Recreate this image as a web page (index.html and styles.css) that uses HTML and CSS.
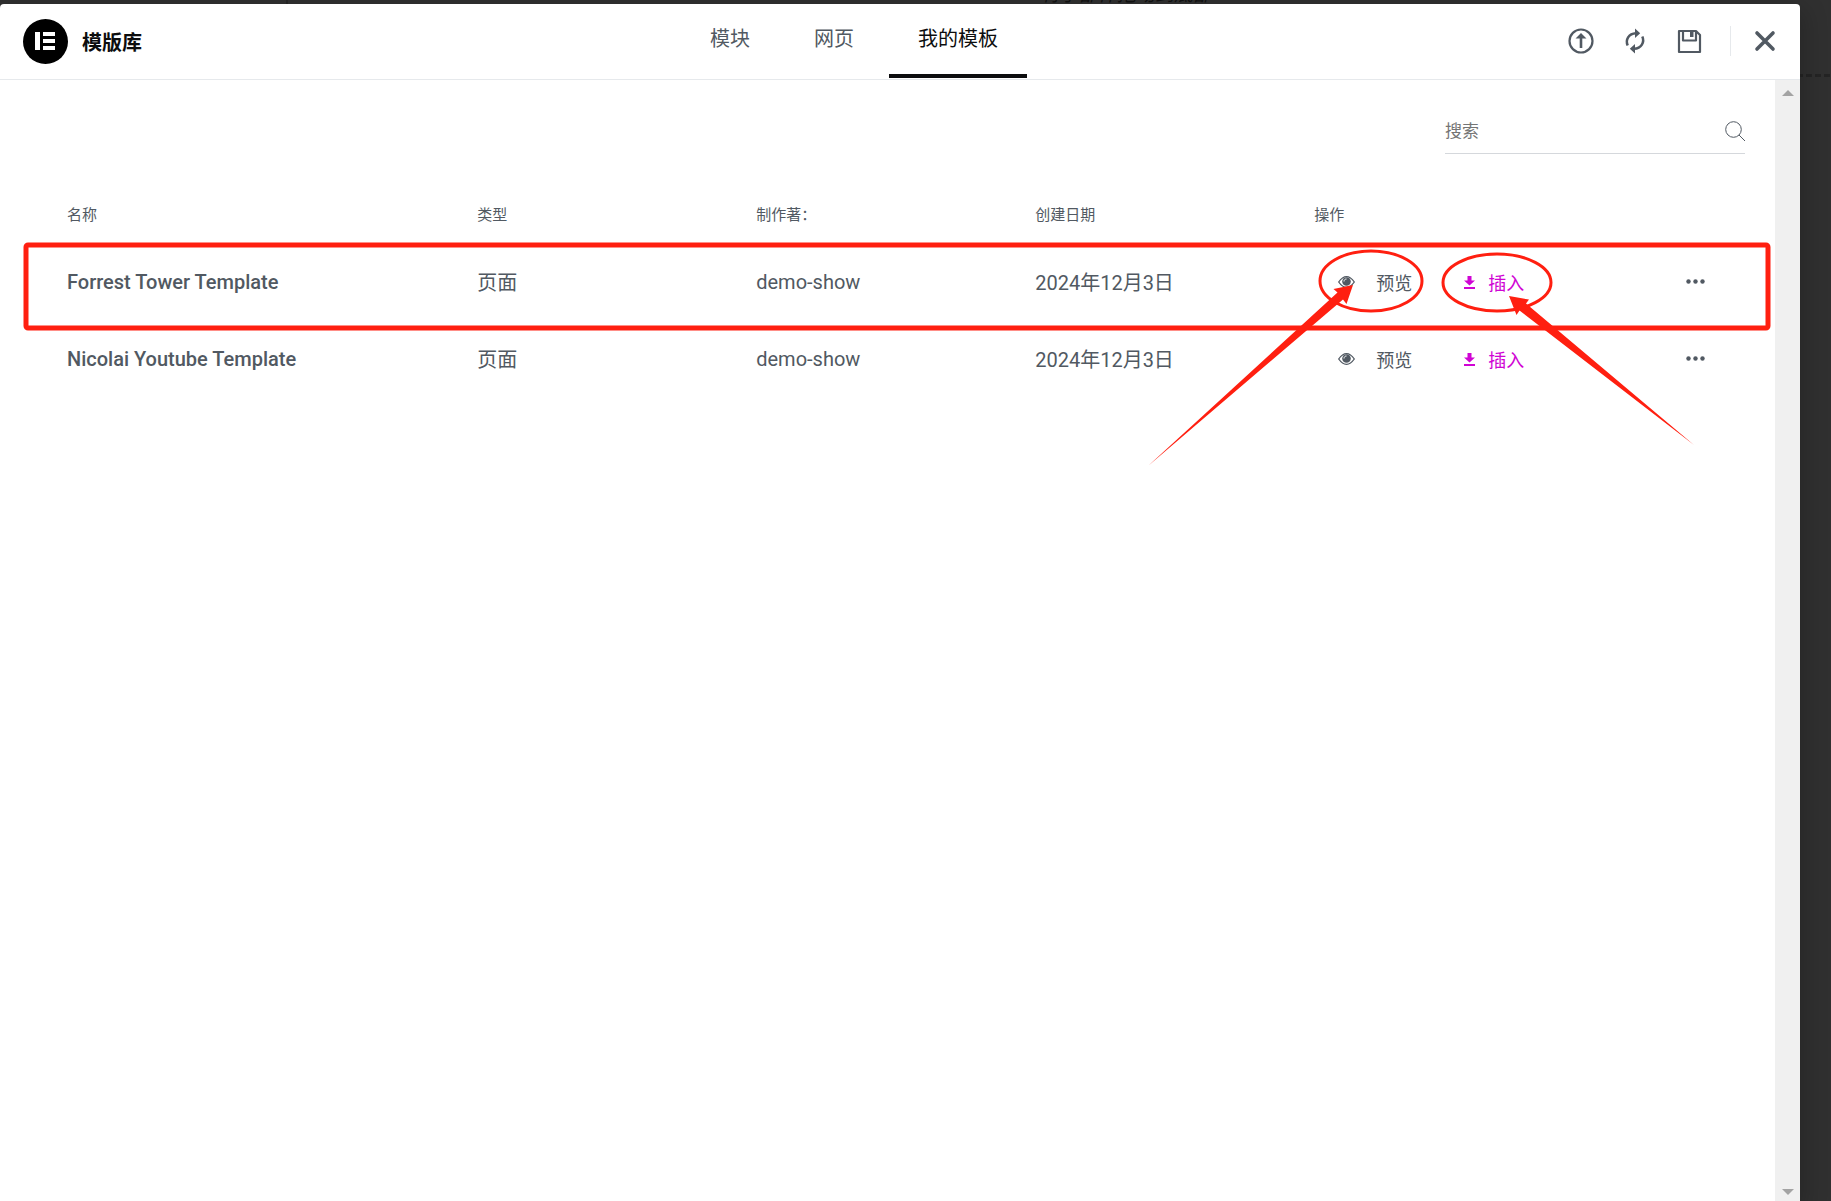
FILE: index.html
```html
<!DOCTYPE html>
<html lang="zh-CN">
<head>
<meta charset="utf-8">
<title>模版库</title>
<link rel="stylesheet" href="styles.css">
</head>
<body>
<div class="backdrop" aria-hidden="true">
  <p class="drop-hint">将小部件拖动到底部</p>
  <div class="drop-line"></div>
  <div class="panel-edge"></div>
</div>
<main class="modal">
  <header class="header">
    <div class="brand">
      <svg class="brand-logo" viewBox="0 0 45 45"><circle cx="22.500" cy="22.500" r="22.500"/><path fill="#fff" d="M12 13h5v18h-5zM20 13h12v4H20zM20 20h12v4H20zM20 27h12v4H20z"/></svg>
      <h1 class="brand-title">模版库</h1>
    </div>
    <nav class="tabs">
      <button class="tab" type="button">模块</button>
      <button class="tab" type="button">网页</button>
      <button class="tab tab-active" type="button">我的模板</button>
    </nav>
    <div class="tools">
      <button class="tool" type="button" aria-label="导入模板"><svg viewBox="0 0 26 26"><circle cx="13" cy="13" r="11.500" fill="none" stroke="currentColor" stroke-width="2.200"/><path fill="currentColor" d="M13 5l5.500 5.500h-4.200V20h-2.600v-9.500H7.500z"/></svg></button>
      <button class="tool" type="button" aria-label="同步"><svg viewBox="0 0 26 26"><g fill="none" stroke="currentColor" stroke-width="2.500"><path d="M5.700 17.500C3.200 12 6.500 5.500 14 5.200"/><path d="M20.300 8.500C22.800 14 19.500 20.500 12 20.800"/></g><path fill="currentColor" d="M13 .5l5.200 4.700L13 10zM13 16l-5.200 4.800L13 25.500z"/></svg></button>
      <button class="tool" type="button" aria-label="保存"><svg viewBox="0 0 26 26"><path fill="none" stroke="currentColor" stroke-width="2.200" stroke-linejoin="round" d="M3 3h17l4 4v17H3z M7 3v9.500h13V3"/><path fill="currentColor" d="M14 3h3.500v6H14z"/></svg></button>
      <button class="tool tool-close" type="button" aria-label="关闭"><svg viewBox="0 0 26 26"><path fill="none" stroke="currentColor" stroke-width="3.600" stroke-linecap="round" d="M5 5l16 16M21 5L5 21"/></svg></button>
    </div>
  </header>
  <div class="body">
    <section class="content">
      <form class="search">
        <input class="search-input" type="search" placeholder="搜索" aria-label="搜索">
        <svg class="search-icon" viewBox="0 0 20 20"><circle cx="8.500" cy="8.500" r="7.800"/><path d="M14 14l6 6"/></svg>
      </form>
      <table class="templates">
        <colgroup><col class="col-name"><col class="col-meta"><col class="col-meta"><col class="col-meta"><col class="col-actions"></colgroup>
        <thead>
          <tr><th>名称</th><th>类型</th><th>制作著：</th><th>创建日期</th><th>操作</th></tr>
        </thead>
        <tbody>
          <tr>
            <td class="name">Forrest Tower Template</td><td>页面</td><td>demo-show</td><td>2024年12月3日</td>
            <td><div class="actions">
              <button class="preview" type="button"><svg class="eye" viewBox="0 0 17 12"><path fill="none" stroke="currentColor" stroke-width="1.300" d="M.7 6C3.500 2 6 .7 8.500 .7S13.500 2 16.300 6C13.500 10 11 11.300 8.500 11.300S3.500 10 .7 6z"/><circle cx="8.500" cy="5.500" r="4.300" fill="currentColor"/><path fill="none" stroke="#fff" d="M6 5.500C6 4 7 3 8.500 3"/></svg>预览</button>
              <button class="insert" type="button"><svg class="download" viewBox="0 0 11 14"><path fill="currentColor" d="M3.500 1h4v4.500H11L5.500 10.500 0 5.500h3.500zM0 12h11v2H0z"/></svg>插入</button>
              <button class="more" type="button" aria-label="更多"><svg viewBox="0 0 19 5"><circle cx="2.500" cy="2.500" r="2.200"/><circle cx="9.500" cy="2.500" r="2.200"/><circle cx="16.500" cy="2.500" r="2.200"/></svg></button>
            </div></td>
          </tr>
          <tr>
            <td class="name">Nicolai Youtube Template</td><td>页面</td><td>demo-show</td><td>2024年12月3日</td>
            <td><div class="actions">
              <button class="preview" type="button"><svg class="eye" viewBox="0 0 17 12"><path fill="none" stroke="currentColor" stroke-width="1.300" d="M.7 6C3.500 2 6 .7 8.500 .7S13.500 2 16.300 6C13.500 10 11 11.300 8.500 11.300S3.500 10 .7 6z"/><circle cx="8.500" cy="5.500" r="4.300" fill="currentColor"/><path fill="none" stroke="#fff" d="M6 5.500C6 4 7 3 8.500 3"/></svg>预览</button>
              <button class="insert" type="button"><svg class="download" viewBox="0 0 11 14"><path fill="currentColor" d="M3.500 1h4v4.500H11L5.500 10.500 0 5.500h3.500zM0 12h11v2H0z"/></svg>插入</button>
              <button class="more" type="button" aria-label="更多"><svg viewBox="0 0 19 5"><circle cx="2.500" cy="2.500" r="2.200"/><circle cx="9.500" cy="2.500" r="2.200"/><circle cx="16.500" cy="2.500" r="2.200"/></svg></button>
            </div></td>
          </tr>
        </tbody>
      </table>
    </section>
    <div class="scrollbar" aria-hidden="true">
      <svg viewBox="0 0 12 6"><path d="M6 0l6 6H0z"/></svg>
      <svg viewBox="0 0 12 6"><path d="M0 0h12L6 6z"/></svg>
    </div>
  </div>
</main>
<svg class="markup" viewBox="0 0 1831 1201" aria-hidden="true">
  <g fill="none" stroke="#ff1f10">
    <rect x="26" y="245" width="1742" height="83" rx="2" stroke-width="5"/>
    <ellipse cx="1371" cy="281" rx="51" ry="30" stroke-width="3"/>
    <ellipse cx="1497" cy="282.500" rx="54" ry="28.500" stroke-width="3"/>
  </g>
  <g fill="#ff1f10">
    <path d="M1353 285L1333.500 289 1337.500 292.500 1148 466 1343 299.500 1346.500 304z"/>
    <path d="M1509 296L1529 299.500 1526 303.500 1694 445 1519.500 310.500 1516.500 315z"/>
  </g>
</svg>
</body>
</html>
```
FILE: styles.css
```css
* {
  box-sizing: border-box;
}

body {
  margin: 0;
  min-height: 100vh;
  display: flex;
  padding: 4px 31px 0 0;
  background: #303030;
  color: #515962;
  font-family: Roboto, "Noto Sans CJK SC", sans-serif;
  font-size: 20px;
  overflow: hidden;
}

button,
input {
  margin: 0;
  padding: 0;
  border: 0;
  background: none;
  color: inherit;
  font: inherit;
}

svg {
  display: block;
}

.backdrop {
  position: absolute;
  inset: 0;
  overflow: hidden;
}

.drop-hint {
  position: absolute;
  left: 1041px;
  top: -18px;
  margin: 0;
  color: #111;
  font-size: 19px;
  font-style: italic;
  line-height: 26px;
}

.drop-line {
  position: absolute;
  top: 74px;
  right: 0;
  width: 31px;
  height: 3px;
  background: repeating-linear-gradient(90deg, #242424 0 3px, transparent 3px 6px, #242424 6px 9px);
}

.panel-edge {
  position: absolute;
  left: 286px;
  top: 0;
  width: 2px;
  height: 4px;
  background: #262626;
}

.modal {
  position: relative;
  flex: 1;
  display: flex;
  flex-direction: column;
  background: #fff;
  border-radius: 4px 4px 0 0;
  box-shadow: 2px 8px 23px 3px rgba(0, 0, 0, 0.2);
}

.header {
  display: grid;
  grid-template-columns: 681fr auto 773fr;
  height: 76px;
  border-bottom: 1px solid #e6e9ec;
}

.brand {
  display: flex;
  align-items: center;
  gap: 14px;
  padding-left: 23px;
}

.brand-logo {
  width: 45px;
  height: 45px;
}

.brand-title {
  margin: 0;
  color: #0c0d0e;
  font-size: 20px;
  font-weight: 700;
}

.tabs {
  display: flex;
  gap: 6px;
}

.tab {
  height: 74px;
  padding: 0 29px 4px;
  border-bottom: 4px solid transparent;
}

.tab-active {
  border-color: #0c0d0e;
  color: #0c0d0e;
}

.tools {
  display: flex;
  align-items: center;
  justify-content: flex-end;
  gap: 28px;
  padding: 0 22px 2px 0;
}

.tool svg {
  width: 26px;
  height: 26px;
}

.tool-close {
  padding: 2px 0;
  padding-left: 21px;
  border-left: 1px solid #e6e9ec;
}

.body {
  flex: 1;
  display: flex;
}

.content {
  flex: 1;
  padding: 28px 30px 0;
}

.search {
  display: flex;
  align-items: center;
  width: 300px;
  height: 46px;
  margin-left: auto;
  border-bottom: 1px solid #d5d8dc;
}

.search-input {
  flex: 1;
  min-width: 0;
  outline: 0;
  font-size: 17px;
}

.search-input::placeholder {
  color: #757575;
}

.search-icon {
  width: 20px;
  height: 20px;
  fill: none;
  stroke: #515962;
}

.templates {
  width: calc(100% - 74px);
  margin: 35px 37px 0;
  border-collapse: collapse;
  table-layout: fixed;
  text-align: left;
}

.col-name {
  width: 25%;
}

.col-meta {
  width: 17%;
}

.col-actions {
  width: 24%;
}

.templates th {
  height: 54px;
  padding: 0 0 5px;
  font-size: 15px;
  font-weight: 400;
}

.templates td {
  height: 77px;
  padding: 0;
  font-weight: 400;
}

.templates .name {
  font-weight: 500;
}

.actions {
  display: flex;
  align-items: center;
  padding: 0 3px 0 24px;
  font-size: 18px;
}

.preview,
.insert {
  display: flex;
  align-items: center;
}

.preview {
  gap: 21px;
}

.insert {
  gap: 13px;
  margin-left: 52px;
  color: #d004d4;
}

.eye {
  width: 17px;
  height: 12px;
}

.download {
  width: 11px;
  height: 14px;
}

.more {
  margin-left: auto;
}

.more svg {
  width: 19px;
  height: 5px;
  fill: #515962;
}

.scrollbar {
  display: flex;
  flex-direction: column;
  justify-content: space-between;
  align-items: center;
  width: 25px;
  padding: 10px 0 6px;
  background: #f0f0f0;
}

.scrollbar svg {
  width: 12px;
  height: 6px;
  fill: #a3a3a3;
}

.markup {
  position: absolute;
  left: 0;
  top: 0;
  width: 1831px;
  height: 1201px;
  pointer-events: none;
}
```
